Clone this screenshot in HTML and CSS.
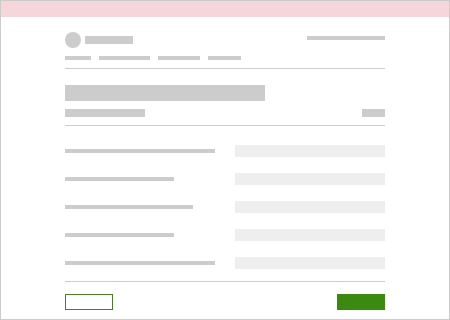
FILE: index.html
```html
<!DOCTYPE html>
<html lang="en">
<head>
    <meta charset="UTF-8">
    <meta name="viewport" content="width=device-width, initial-scale=1.0">
    <title>Settings form</title>
    <link rel="stylesheet" href="styles.css">
</head>
<body>
    <div class="frame">
        <div class="banner"></div>

        <div class="container">
            <header class="top">
                <div class="brand">
                    <span class="avatar"></span>
                    <span class="bar logo"></span>
                </div>
                <span class="bar account"></span>
            </header>

            <nav class="nav">
                <span class="bar" style="width: 26px"></span>
                <span class="bar" style="width: 51px"></span>
                <span class="bar" style="width: 42px"></span>
                <span class="bar" style="width: 33px"></span>
            </nav>

            <div class="title-block">
                <div class="bar title"></div>
                <div class="subtitle-row">
                    <span class="bar subtitle"></span>
                    <span class="bar tag"></span>
                </div>
            </div>

            <form class="fields">
                <div class="field">
                    <span class="bar label" style="width: 150px"></span>
                    <span class="input"></span>
                </div>
                <div class="field">
                    <span class="bar label" style="width: 109px"></span>
                    <span class="input"></span>
                </div>
                <div class="field">
                    <span class="bar label" style="width: 128px"></span>
                    <span class="input"></span>
                </div>
                <div class="field">
                    <span class="bar label" style="width: 109px"></span>
                    <span class="input"></span>
                </div>
                <div class="field">
                    <span class="bar label" style="width: 150px"></span>
                    <span class="input"></span>
                </div>
            </form>

            <div class="actions">
                <button type="button" class="btn btn-outline"></button>
                <button type="submit" class="btn btn-primary"></button>
            </div>
        </div>
    </div>
</body>
</html>
```

FILE: styles.css
```css
* {
    box-sizing: border-box;
}

body {
    margin: 0;
    font-family: 'Liberation Sans', Arial, sans-serif;
    background-color: #ffffff;
}

.frame {
    width: 450px;
    height: 320px;
    border: 1px solid #cccccc;
    background: #ffffff;
}

.banner {
    height: 16px;
    background-color: #f5d6db;
}

.container {
    width: 320px;
    margin: 0 auto;
    padding-top: 15px;
}

.bar {
    display: block;
    background-color: #cccccc;
}

.top {
    display: flex;
    justify-content: space-between;
    align-items: flex-start;
    height: 16px;
}

.brand {
    display: flex;
    align-items: center;
    gap: 4px;
}

.avatar {
    width: 16px;
    height: 16px;
    border-radius: 50%;
    background-color: #cccccc;
}

.logo {
    width: 48px;
    height: 8px;
}

.account {
    width: 78px;
    height: 4px;
    margin-top: 4px;
}

.nav {
    display: flex;
    gap: 8px;
    margin-top: 8px;
    padding-bottom: 8px;
    border-bottom: 1px solid #cccccc;
}

.nav .bar {
    height: 4px;
}

.title-block {
    padding: 16px 0 8px;
    border-bottom: 1px solid #cccccc;
}

.title {
    width: 200px;
    height: 16px;
}

.subtitle-row {
    display: flex;
    justify-content: space-between;
    margin-top: 8px;
}

.subtitle {
    width: 80px;
    height: 8px;
}

.tag {
    width: 23px;
    height: 8px;
}

.fields {
    margin: 0;
    padding: 11px 0 4px;
    border-bottom: 1px solid #cccccc;
}

.field {
    display: grid;
    grid-template-columns: 150px 150px;
    column-gap: 20px;
    align-items: center;
    padding: 8px 0;
}

.label {
    height: 4px;
}

.input {
    display: block;
    height: 12px;
    background-color: #eeeeee;
}

.actions {
    display: flex;
    justify-content: space-between;
    margin-top: 12px;
}

.btn {
    width: 48px;
    height: 16px;
    padding: 0;
    border-radius: 0;
    cursor: pointer;
}

.btn-outline {
    background: #ffffff;
    border: 1px solid #4a7f26;
}

.btn-primary {
    background-color: #3b8a10;
    border: none;
}
```
